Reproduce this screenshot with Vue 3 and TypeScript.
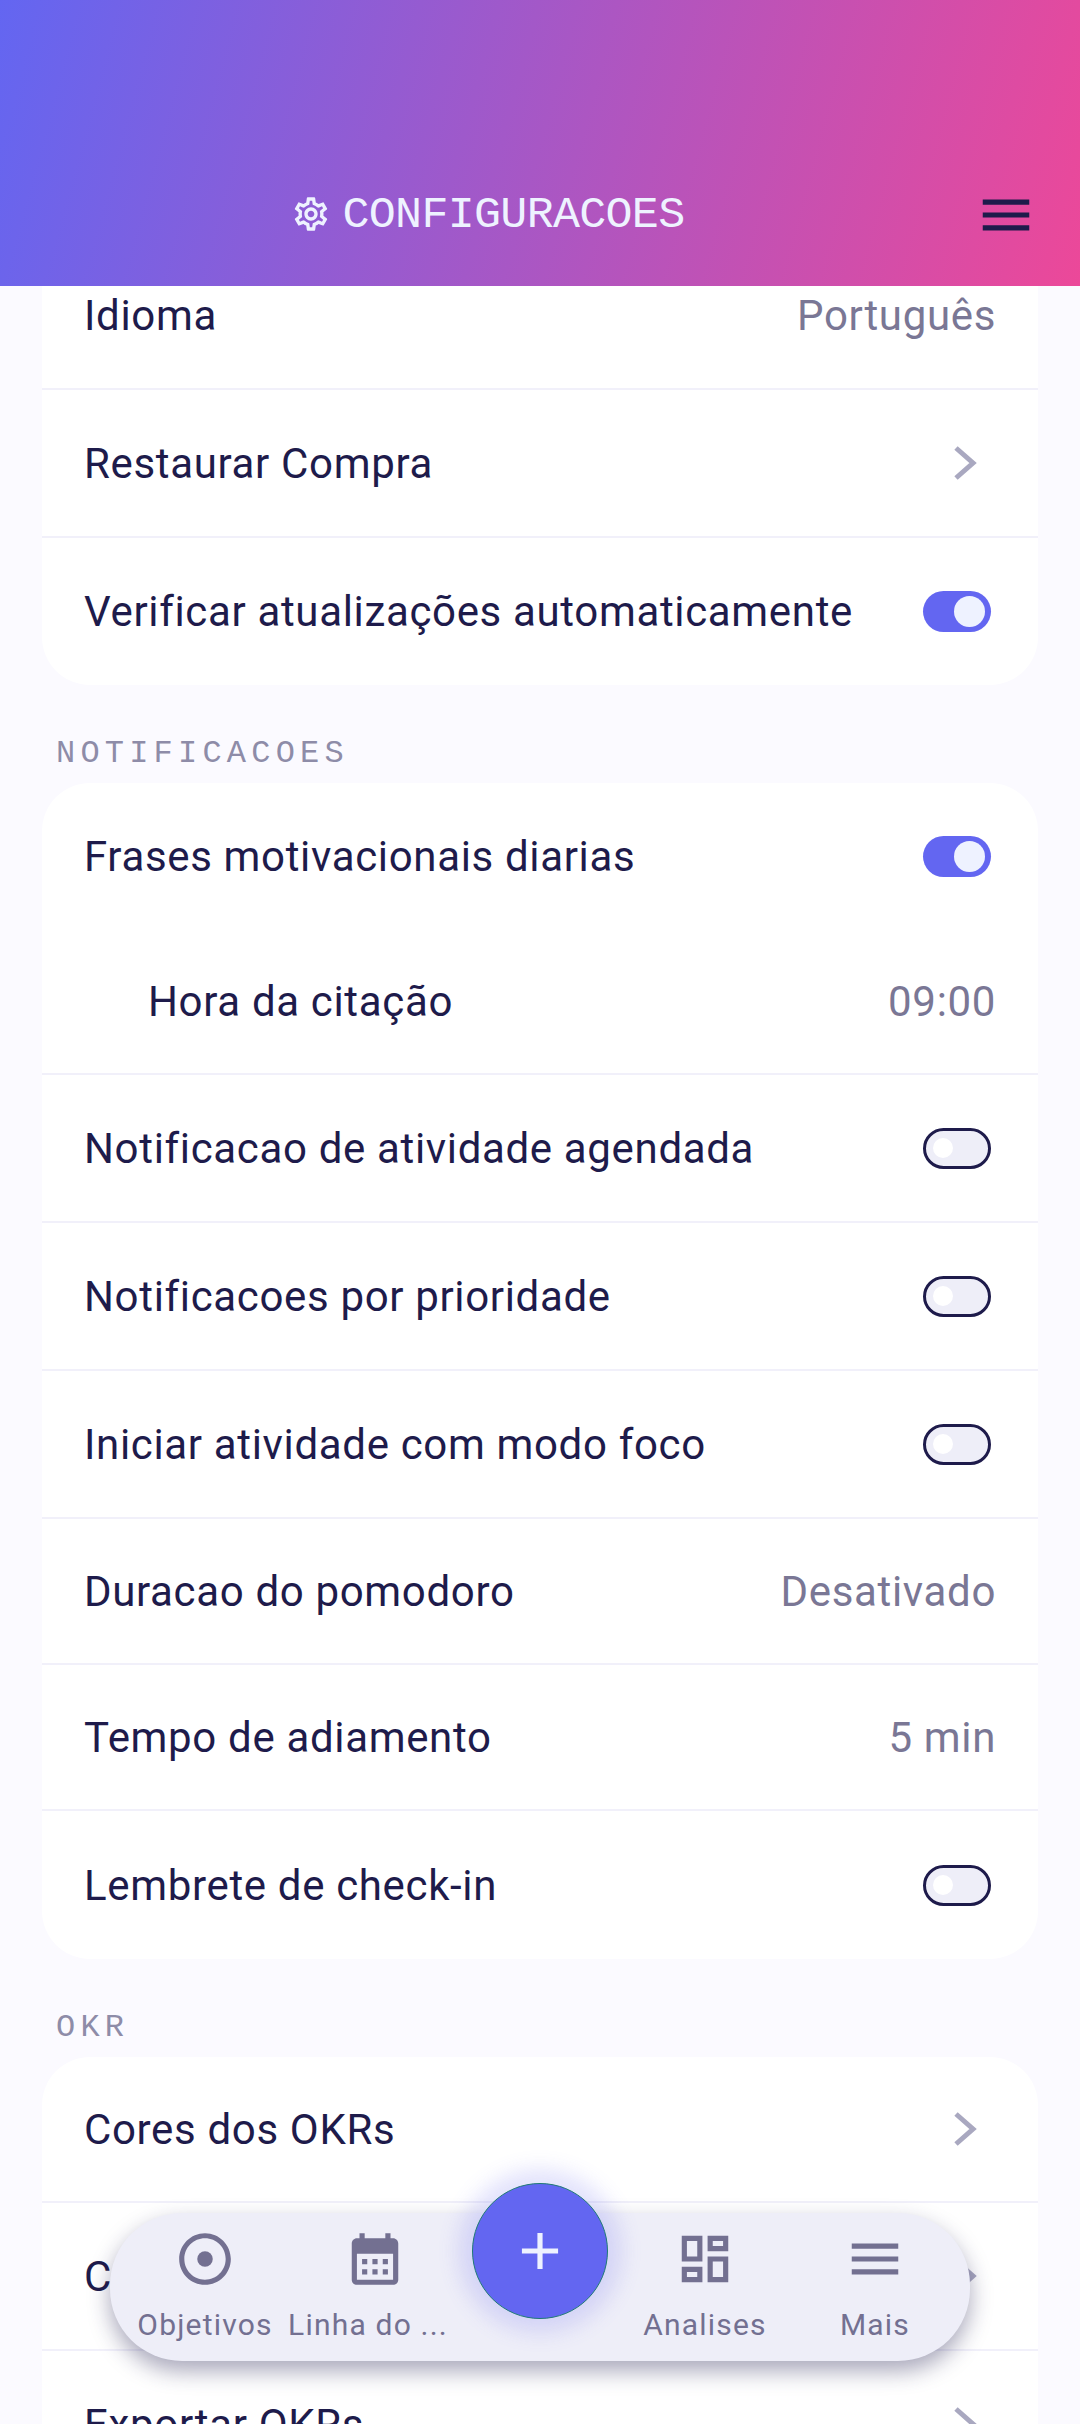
<script setup lang="ts">
interface Row {
  label: string
  value?: string
  toggle?: boolean
  chevron?: boolean
  indent?: boolean
  plain?: boolean
  height?: number
}

interface Section {
  title?: string
  rows: Row[]
}

const sections: Section[] = [
  {
    rows: [
      {label: 'Idioma', value: 'Português'},
      {label: 'Restaurar Compra', chevron: true},
      {label: 'Verificar atualizações automaticamente', toggle: true, plain: true, height: 147},
    ],
  },
  {
    title: 'NOTIFICACOES',
    rows: [
      {label: 'Frases motivacionais diarias', toggle: true, plain: true, height: 146},
      {label: 'Hora da citação', value: '09:00', indent: true, height: 146},
      {label: 'Notificacao de atividade agendada', toggle: false},
      {label: 'Notificacoes por prioridade', toggle: false},
      {label: 'Iniciar atividade com modo foco', toggle: false},
      {label: 'Duracao do pomodoro', value: 'Desativado', height: 146},
      {label: 'Tempo de adiamento', value: '5 min', height: 146},
      {label: 'Lembrete de check-in', toggle: false, plain: true},
    ],
  },
  {
    title: 'OKR',
    rows: [
      {label: 'Cores dos OKRs', chevron: true, height: 146},
      {label: 'Categorias dos OKRs', chevron: true},
      {label: 'Exportar OKRs', chevron: true},
    ],
  },
]

const menuPath = 'M3 18h18v-2H3v2zm0-5h18v-2H3v2zm0-7v2h18V6H3z'
</script>

<template>
  <div class="screen">
    <header class="top-bar">
      <div class="title">
        <svg class="gear" viewBox="0 0 24 24" fill="currentColor">
          <path d="M19.43 12.98c.04-.32.07-.64.07-.98 0-.34-.03-.66-.07-.98l2.11-1.65c.19-.15.24-.42.12-.64l-2-3.46c-.09-.16-.26-.25-.44-.25-.06 0-.12.01-.17.03l-2.49 1c-.52-.4-1.08-.73-1.69-.98l-.38-2.65C14.46 2.18 14.25 2 14 2h-4c-.25 0-.46.18-.49.42l-.38 2.65c-.61.25-1.17.59-1.69.98l-2.49-1c-.06-.02-.12-.03-.18-.03-.17 0-.34.09-.43.25l-2 3.46c-.13.22-.07.49.12.64l2.11 1.65c-.04.32-.07.65-.07.98 0 .33.03.66.07.98l-2.11 1.65c-.19.15-.24.42-.12.64l2 3.46c.09.16.26.25.44.25.06 0 .12-.01.17-.03l2.49-1c.52.4 1.08.73 1.69.98l.38 2.65c.03.24.24.42.49.42h4c.25 0 .46-.18.49-.42l.38-2.65c.61-.25 1.17-.59 1.69-.98l2.49 1c.06.02.12.03.18.03.17 0 .34-.09.43-.25l2-3.46c.12-.22.07-.49-.12-.64l-2.11-1.65zm-1.98-1.71c.04.31.05.52.05.73 0 .21-.02.43-.05.73l-.14 1.13.89.7 1.08.84-.7 1.21-1.27-.51-1.04-.42-.9.68c-.43.32-.84.56-1.25.73l-1.06.43-.16 1.13-.2 1.35h-1.4l-.19-1.35-.16-1.13-1.06-.43c-.43-.18-.83-.41-1.23-.71l-.91-.7-1.06.43-1.27.51-.7-1.21 1.08-.84.89-.7-.14-1.13c-.03-.31-.05-.54-.05-.74s.02-.43.05-.73l.14-1.13-.89-.7-1.08-.84.7-1.21 1.27.51 1.04.42.9-.68c.43-.32.84-.56 1.25-.73l1.06-.43.16-1.13.2-1.35h1.39l.19 1.35.16 1.13 1.06.43c.43.18.83.41 1.23.71l.91.7 1.06-.43 1.27-.51.7 1.21-1.07.85-.89.7.14 1.13zM12 8c-2.21 0-4 1.79-4 4s1.79 4 4 4 4-1.79 4-4-1.79-4-4-4zm0 6c-1.1 0-2-.9-2-2s.9-2 2-2 2 .9 2 2-.9 2-2 2z"/>
        </svg>
        <span>CONFIGURACOES</span>
      </div>
      <svg class="burger" viewBox="0 0 24 24" fill="currentColor">
        <path :d="menuPath"/>
      </svg>
    </header>

    <main class="scroller">
      <div class="list">
        <section v-for="(section, i) in sections" :key="i">
          <h2 v-if="section.title" class="section-title">{{ section.title }}</h2>
          <div class="card">
            <div
                v-for="row in section.rows"
                :key="row.label"
                class="row"
                :class="{indent: row.indent, plain: row.plain}"
                :style="row.height ? {height: row.height + 'px'} : undefined"
            >
              <span class="label">{{ row.label }}</span>
              <span v-if="row.value" class="value">{{ row.value }}</span>
              <svg v-else-if="row.chevron" class="chevron" viewBox="0 0 24 36" fill="none">
                <path d="M3 3 L20 18 L3 33"/>
              </svg>
              <span v-else class="switch" :class="{on: row.toggle}"><i class="knob"/></span>
            </div>
          </div>
        </section>
      </div>
    </main>

    <nav class="bottom-nav">
      <div class="nav-item">
        <svg viewBox="0 0 24 24" fill="currentColor">
          <circle cx="12" cy="12" r="3"/>
          <path d="M12 2C6.48 2 2 6.48 2 12s4.48 10 10 10 10-4.48 10-10S17.52 2 12 2zm0 18c-4.42 0-8-3.58-8-8s3.58-8 8-8 8 3.58 8 8-3.58 8-8 8z"/>
        </svg>
        <span>Objetivos</span>
      </div>
      <div class="nav-item">
        <svg viewBox="0 0 24 24" fill="currentColor">
          <path fill-rule="evenodd" d="M19 4h-1V2h-2v2H8V2H6v2H5c-1.1 0-2 .9-2 2v14c0 1.1.9 2 2 2h14c1.1 0 2-.9 2-2V6c0-1.1-.9-2-2-2zm0 16H5V10h14v10z"/>
          <path d="M7 12h2v2H7zM11 12h2v2h-2zM15 12h2v2h-2zM7 16h2v2H7zM11 16h2v2h-2zM15 16h2v2h-2z"/>
        </svg>
        <span class="trimmed">Linha do ...</span>
      </div>
      <div class="fab-gap"/>
      <div class="nav-item">
        <svg viewBox="0 0 24 24" fill="currentColor">
          <path d="M19 5v2h-4V5h4M9 5v6H5V5h4m10 8v6h-4v-6h4M9 17v2H5v-2h4M21 3h-8v6h8V3zM11 3H3v10h8V3zm10 8h-8v10h8V11zm-10 4H3v6h8v-6z"/>
        </svg>
        <span>Analises</span>
      </div>
      <div class="nav-item">
        <svg viewBox="0 0 24 24" fill="currentColor">
          <path :d="menuPath"/>
        </svg>
        <span>Mais</span>
      </div>
    </nav>

    <button class="fab">
      <svg viewBox="0 0 24 24" fill="currentColor">
        <path d="M19 13h-6v6h-2v-6H5v-2h6V5h2v6h6v2z"/>
      </svg>
    </button>
  </div>
</template>

<style>
html, body {
  margin: 0;
  background: #fbfaff;
}
</style>

<style scoped>
.screen {
  position: relative;
  width: 1080px;
  height: 2424px;
  overflow: hidden;
  display: flex;
  flex-direction: column;
  background: #fbfaff;
  font-family: Roboto, sans-serif;
  color: #1e1b4b;
}

.top-bar {
  flex: none;
  height: 286px;
  box-sizing: border-box;
  padding: 0 43px 40px 0;
  display: flex;
  align-items: flex-end;
  background: linear-gradient(105deg, #6366f1, #ec4899);
  position: relative;
  z-index: 1;
}

.title {
  flex: 1;
  display: flex;
  align-items: center;
  justify-content: center;
  gap: 12px;
  height: 62px;
  color: #eef2ff;
  font-family: "Liberation Mono", monospace;
  font-size: 45px;
  letter-spacing: -0.7px;
}

.gear {
  width: 40px;
  height: 40px;
  margin-top: -2px;
}

.burger {
  width: 62px;
  height: 62px;
}

.scroller {
  flex: 1;
  min-height: 0;
  overflow: hidden;
}

.list {
  margin-top: -44px;
  padding: 0 42px;
}

.section-title {
  margin: 0;
  height: 98px;
  box-sizing: border-box;
  padding: 51px 0 0 14px;
  font-family: "Liberation Mono", monospace;
  font-size: 32px;
  line-height: 36px;
  font-weight: 400;
  letter-spacing: 5.2px;
  color: #8e8ca8;
}

.card {
  background: #fff;
  border-radius: 48px;
}

.row {
  height: 148px;
  box-sizing: border-box;
  padding: 0 42px;
  display: flex;
  align-items: center;
  justify-content: space-between;
  border-bottom: 2px solid #f1f0fa;
  font-size: 42px;
  letter-spacing: 0.66px;
}

.row.plain {
  border-bottom: none;
}

.row.indent {
  padding-left: 106px;
}

.value {
  color: #7a7795;
}

.chevron {
  width: 24px;
  height: 36px;
  margin-right: 19px;
  stroke: #a9a8c0;
  stroke-width: 5;
}

.switch {
  width: 68px;
  height: 41px;
  margin-right: 5px;
  box-sizing: border-box;
  border: 3px solid #1e1b4b;
  border-radius: 21px;
  background: #eeeef8;
  display: flex;
  align-items: center;
  padding-left: 7px;
}

.knob {
  width: 20px;
  height: 20px;
  border-radius: 50%;
  background: #fff;
}

.switch.on {
  border: none;
  background: #6366f1;
  justify-content: flex-end;
  padding: 0 6px 0 0;
}

.switch.on .knob {
  width: 31px;
  height: 31px;
  background: #eef2ff;
}

.bottom-nav {
  position: absolute;
  left: 110px;
  top: 2213px;
  width: 860px;
  height: 148px;
  box-sizing: border-box;
  padding: 0 10px;
  display: flex;
  background: #eeeef8;
  border-radius: 72px;
  box-shadow: 0 10px 22px rgba(30, 27, 75, 0.38);
  color: #737091;
}

.nav-item {
  width: 170px;
  display: flex;
  flex-direction: column;
  align-items: center;
  padding-top: 15px;
  font-size: 30px;
  letter-spacing: 1.2px;
}

.nav-item svg {
  width: 62px;
  height: 62px;
}

.nav-item span {
  margin-top: 17px;
  line-height: 36px;
  white-space: nowrap;
}

.nav-item .trimmed {
  margin-right: 14px;
}

.fab-gap {
  width: 160px;
}

.fab {
  position: absolute;
  left: 472px;
  top: 2183px;
  width: 136px;
  height: 136px;
  padding: 0;
  border: 1px solid #1f7a74;
  border-radius: 50%;
  background: #6366f1;
  color: #eef2ff;
  display: flex;
  align-items: center;
  justify-content: center;
  box-shadow: 0 0 20px 14px rgba(99, 102, 241, 0.18);
}

.fab svg {
  width: 62px;
  height: 62px;
}
</style>
